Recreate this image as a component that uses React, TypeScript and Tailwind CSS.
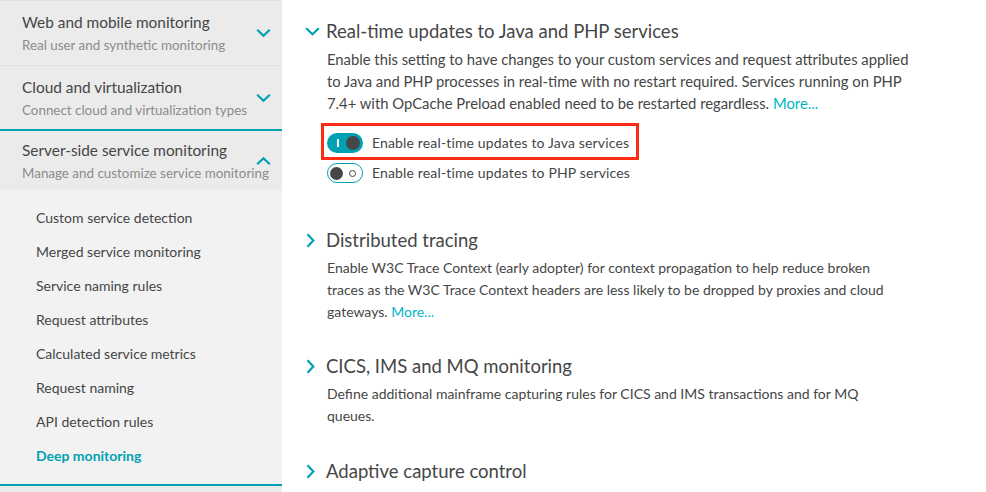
const TEAL = "text-[#00a1b2]";

function ChevronDown({ className }: { className?: string }) {
  return (
    <svg width="15" height="9" viewBox="0 0 15 9" className={className} fill="none">
      <path d="M1.2 1.2 L7.5 7.3 L13.8 1.2" stroke="currentColor" strokeWidth="2.2" />
    </svg>
  );
}

function ChevronUp({ className }: { className?: string }) {
  return (
    <svg width="15" height="9" viewBox="0 0 15 9" className={className} fill="none">
      <path d="M1.2 7.8 L7.5 1.7 L13.8 7.8" stroke="currentColor" strokeWidth="2.2" />
    </svg>
  );
}

function ChevronRight({ className }: { className?: string }) {
  return (
    <svg width="9" height="15" viewBox="0 0 9 15" className={className} fill="none">
      <path d="M1.5 1.2 L7.3 7.5 L1.5 13.8" stroke="currentColor" strokeWidth="2.2" />
    </svg>
  );
}

interface GroupProps {
  title: string;
  subtitle: string;
  open?: boolean;
  className?: string;
}

function NavGroup({ title, subtitle, open, className }: GroupProps) {
  return (
    <div className={`relative flex items-center bg-[#ebebeb] pl-[22px] ${className ?? ""}`}>
      <div className="flex flex-col whitespace-nowrap">
        <span className="text-[15.4px] leading-[20px] text-[#454646]">{title}</span>
        <span className="mt-[4px] text-[13.4px] leading-[18px] text-[#8c8c8c]">{subtitle}</span>
      </div>
      <span className="absolute right-[11px] top-1/2 flex -translate-y-1/2">
        {open ? <ChevronUp className={TEAL} /> : <ChevronDown className={TEAL} />}
      </span>
    </div>
  );
}

const subItems = [
  "Custom service detection",
  "Merged service monitoring",
  "Service naming rules",
  "Request attributes",
  "Calculated service metrics",
  "Request naming",
  "API detection rules",
];

function Toggle({ on }: { on: boolean }) {
  if (on) {
    return (
      <span className="flex h-[20px] w-[36px] shrink-0 items-center justify-between rounded-full bg-[#00a1b2] pl-[10px] pr-[3px]">
        <span className="h-[8px] w-[1.5px] bg-white" />
        <span className="h-[14px] w-[14px] rounded-full bg-[#454646]" />
      </span>
    );
  }
  return (
    <span className="flex h-[20px] w-[36px] shrink-0 items-center justify-between rounded-full border-[1.5px] border-[#00a1b2] bg-white pl-[2px] pr-[6px]">
      <span className="h-[13px] w-[13px] rounded-full bg-[#454646]" />
      <span className="h-[7px] w-[7px] rounded-full border border-[#454646]" />
    </span>
  );
}

function Section({
  title,
  open,
  children,
  className,
}: {
  title: string;
  open?: boolean;
  children: React.ReactNode;
  className?: string;
}) {
  return (
    <section className={className}>
      <div className="flex items-center">
        <span className="flex w-[22px] justify-start pl-[1px]">
          {open ? <ChevronDown className={TEAL} /> : <ChevronRight className={`${TEAL} ml-[1px]`} />}
        </span>
        <h2 className="text-[18.5px] leading-[24px] text-[#454646]">{title}</h2>
      </div>
      <div className="mt-[5px] pl-[23px] text-[14px] leading-[22px] text-[#454646]">{children}</div>
    </section>
  );
}

export default function App() {
  return (
    <div
      className="flex h-[492px] w-[986px] overflow-hidden bg-white"
      style={{ fontFamily: "Lato, 'Open Sans', sans-serif" }}
    >
      <aside className="flex w-[282px] shrink-0 flex-col bg-[#f2f2f2]">
        <NavGroup
          title="Web and mobile monitoring"
          subtitle="Real user and synthetic monitoring"
          className="h-[65px] border-t border-[#e2e2e2]"
        />
        <NavGroup
          title="Cloud and virtualization"
          subtitle="Connect cloud and virtualization types"
          className="h-[64px] border-t border-[#e2e2e2]"
        />
        <NavGroup
          title="Server-side service monitoring"
          subtitle="Manage and customize service monitoring"
          open
          className="h-[61px] border-t-2 border-[#00a1b2]"
        />
        <ul className="flex flex-col pt-[10px] pb-[12px] pl-[36px]">
          {subItems.map((item) => (
            <li key={item} className="flex h-[34px] items-center text-[14px] text-[#454646]">
              {item}
            </li>
          ))}
          <li className="flex h-[34px] items-center text-[14px] font-bold text-[#00a1b2]">Deep monitoring</li>
        </ul>
        <div className="flex-1 border-t-2 border-[#00a1b2] bg-[#ebebeb]" />
      </aside>

      <main className="flex-1 pl-[22px] pt-[19px]">
        <Section title="Real-time updates to Java and PHP services" open>
          <p className="mt-[1px] whitespace-nowrap text-[14.8px]">
            Enable this setting to have changes to your custom services and request attributes applied
            <br />
            to Java and PHP processes in real-time with no restart required. Services running on PHP
            <br />
            7.4+ with OpCache Preload enabled need to be restarted regardless.{" "}
            <span className="text-[#00b4c8]">More...</span>
          </p>
          <div className="mt-[14px] flex flex-col tracking-[0.15px]">
            <div className="relative flex h-[30px] items-center gap-[9px]">
              <span className="pointer-events-none absolute left-[-6px] top-[-5px] h-[37px] w-[318px] border-[3px] border-[#ff2a12]" />
              <Toggle on />
              <span>Enable real-time updates to Java services</span>
            </div>
            <div className="flex h-[30px] items-center gap-[9px]">
              <Toggle on={false} />
              <span>Enable real-time updates to PHP services</span>
            </div>
          </div>
        </Section>

        <Section title="Distributed tracing" className="mt-[40px]">
          <p className="whitespace-nowrap">
            Enable W3C Trace Context (early adopter) for context propagation to help reduce broken
            <br />
            traces as the W3C Trace Context headers are less likely to be dropped by proxies and cloud
            <br />
            gateways. <span className="text-[#00b4c8]">More...</span>
          </p>
        </Section>

        <Section title="CICS, IMS and MQ monitoring" className="mt-[31px]">
          <p className="whitespace-nowrap">
            Define additional mainframe capturing rules for CICS and IMS transactions and for MQ
            <br />
            queues.
          </p>
        </Section>

        <Section title="Adaptive capture control" className="mt-[32px]">
          <span />
        </Section>
      </main>
    </div>
  );
}
